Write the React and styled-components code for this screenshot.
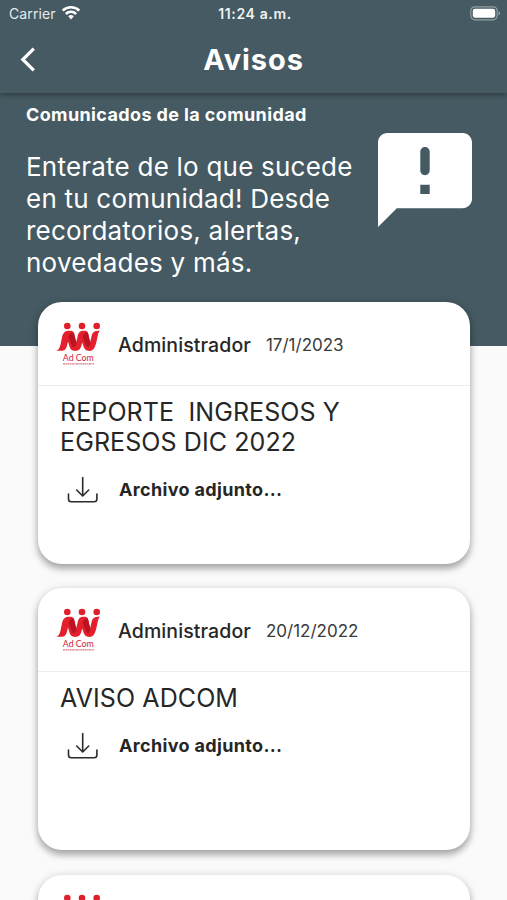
import React from 'react';
import styled, { createGlobalStyle } from 'styled-components';

const notices = [
  { id: 1, author: 'Administrador', date: '17/1/2023', title: 'REPORTE  INGRESOS Y EGRESOS DIC 2022' },
  { id: 2, author: 'Administrador', date: '20/12/2022', title: 'AVISO ADCOM' },
  { id: 3 },
];

const WifiIcon = () => (
  <svg width="20" height="15" viewBox="0 0 20 15" fill="none" stroke="#fff" strokeWidth="2.5">
    <path d="M1.7 5.7a11.8 11.8 0 0 1 16.6 0" />
    <path d="M4.8 9a7.4 7.4 0 0 1 10.4 0" />
    <path d="M10 14.4l-2.8-3.1a4 4 0 0 1 5.6 0z" fill="#fff" stroke="none" />
  </svg>
);

const BatteryIcon = () => (
  <svg width="31" height="15" viewBox="0 0 31 15">
    <rect x="0.8" y="0.8" width="26.4" height="13" rx="4" fill="none" stroke="#fff" strokeOpacity="0.42" strokeWidth="1.2" />
    <rect x="2.8" y="2.8" width="22.4" height="9" rx="2.2" fill="#fff" />
    <path d="M28.6 5.2c1.8.6 1.8 3.6 0 4.2z" fill="#fff" fillOpacity="0.5" />
  </svg>
);

const BackIcon = () => (
  <svg width="16" height="25" viewBox="0 0 16 25" fill="none" stroke="#fff" strokeWidth="3.2">
    <path d="M13.8 1.6L2.8 12.5L13.8 23.4" />
  </svg>
);

const FeedbackIcon = () => (
  <svg width="94" height="94" viewBox="2 2 20 20" fill="#fff">
    <path
      fillRule="evenodd"
      d="M20 2H4c-1.1 0-2 .9-2 2v18l4-4h14c1.1 0 2-.9 2-2V4c0-1.1-.9-2-2-2zM12 11c-.55 0-1-.45-1-1V6c0-.55.45-1 1-1s1 .45 1 1v4c0 .55-.45 1-1 1zm-1 2h2v2h-2z"
    />
  </svg>
);

const DownloadIcon = () => (
  <svg width="32" height="28" viewBox="0 0 32 28" fill="none" stroke="#2b2b2b" strokeWidth="1.6" strokeLinecap="round" strokeLinejoin="round">
    <path d="M15.700 1.500v18.300M9.700 14l6 6l6-6" />
    <path d="M1.500 18v5a2.800 2.800 0 0 0 2.800 2.800h22.800a2.800 2.800 0 0 0 2.800-2.800v-5" />
  </svg>
);

const Logo = () => (
  <svg width="46" height="46" viewBox="0 0 46 46">
    <g fill="#e01f2d">
      <circle cx="11.3" cy="4" r="3.3" />
      <circle cx="26" cy="4" r="3.3" />
      <circle cx="40.7" cy="4" r="3.3" />
    </g>
    <path d="M.4 28.800C4.500 27 4.500 22 6 15.500C7 10.500 9 8.800 13.500 8.800H15C18 9 18.600 12 19.300 16L20.300 20L21.600 14.500C22.600 10.200 24 8.800 27.600 8.800H29.500C32 9 32.600 12 33.200 16L34.200 20L35.600 14C36.600 10.200 38.500 8.800 43.800 8.600C41.600 12 41.800 15 40.300 20.500C38.800 26.500 37 28.900 33.300 28.900C30 28.900 28.500 27.500 27.200 23.500L26.200 20.500L25.400 23.500C24.200 27.500 22.500 28.900 19.300 28.900C15.800 28.900 14.300 27.500 13.200 23.500L12 19.500L11 23.500C10 27.500 8.300 28.800 5 28.800Z" fill="#e4202e" />
    <path d="M12.500 15C13.500 11 16.500 9.500 17.800 11.500L20.300 21C20.300 24.500 18 26 16 24ZM26.700 15C27.700 11 30.800 9.500 32 11.500L34.300 21C34.300 24.500 32 26 30.200 24Z" fill="#b9141f" />
    <text x="6.800" y="39" fontFamily="Lato, sans-serif" fontSize="9.800" textLength="31" lengthAdjust="spacingAndGlyphs" fill="#d32336">Ad Com</text>
    <path d="M7 41.900h31" stroke="#d77882" strokeWidth="1.100" strokeDasharray="2.200 .5 1.200 .4" />
  </svg>
);

const NoticeCard = ({ notice }) => (
  <Card>
    <CardHeader>
      <Logo />
      {notice.author && <Author>{notice.author}</Author>}
      {notice.date && <NoticeDate>{notice.date}</NoticeDate>}
    </CardHeader>
    {notice.title && (
      <CardBody>
        <NoticeTitle>{notice.title}</NoticeTitle>
        <Attachment>
          <DownloadIcon />
          <AttachmentLabel>Archivo adjunto...</AttachmentLabel>
        </Attachment>
      </CardBody>
    )}
  </Card>
);

const App = () => {
  return (
    <Screen>
      <GlobalStyle />
      <Header>
        <StatusBar>
          <Carrier>
            Carrier
            <WifiIcon />
          </Carrier>
          <Clock>11:24 a.m.</Clock>
          <Battery>
            <BatteryIcon />
          </Battery>
        </StatusBar>
        <NavBar>
          <BackButton aria-label="Volver">
            <BackIcon />
          </BackButton>
          <NavTitle>Avisos</NavTitle>
        </NavBar>
      </Header>
      <Hero>
        <HeroText>
          <HeroHeading>Comunicados de la comunidad</HeroHeading>
          <HeroCopy>
            Enterate de lo que sucede en tu comunidad! Desde recordatorios, alertas, novedades y más.
          </HeroCopy>
        </HeroText>
        <FeedbackIcon />
      </Hero>
      <NoticeList>
        {notices.map((notice) => (
          <NoticeCard key={notice.id} notice={notice} />
        ))}
      </NoticeList>
    </Screen>
  );
};

const GlobalStyle = createGlobalStyle`
  * {
    box-sizing: border-box;
  }
  body {
    margin: 0;
    background: #fafafa;
    font-family: Inter, sans-serif;
    overflow: hidden;
  }
  svg {
    display: block;
    flex-shrink: 0;
  }
  h1, h2, p {
    margin: 0;
  }
`;

const Screen = styled.div`
  height: 900px;
  overflow: hidden;
  background: #fafafa;
`;

const Header = styled.header`
  position: relative;
  height: 93px;
  background: #455a62;
  color: #fff;
  box-shadow: 0 2px 5px rgba(0, 0, 0, 0.35);
`;

const StatusBar = styled.div`
  display: grid;
  grid-template-columns: 1fr auto 1fr;
  align-items: center;
  height: 27px;
  padding: 0 6px 0 9px;
`;

const Carrier = styled.div`
  display: flex;
  align-items: center;
  gap: 5px;
  font-size: 14px;
  letter-spacing: 0.1px;
  color: #e6eaec;

  svg {
    margin-top: -2px;
  }
`;

const Clock = styled.div`
  font-size: 14px;
  font-weight: 600;
  letter-spacing: 0.65px;
  color: #eef1f2;
`;

const Battery = styled.div`
  display: flex;
  justify-content: flex-end;
`;

const NavBar = styled.div`
  display: grid;
  grid-template-columns: 60px 1fr 60px;
  align-items: center;
  height: 64px;
`;

const BackButton = styled.button`
  display: flex;
  padding: 0 0 0 20px;
  border: 0;
  background: none;
`;

const NavTitle = styled.h1`
  text-align: center;
  font-size: 29px;
  font-weight: 700;
  letter-spacing: 0.9px;
`;

const Hero = styled.section`
  display: flex;
  height: 253px;
  padding: 11px 34px 0 26px;
  background: #455a62;
  color: #fff;

  > svg {
    margin-top: 29px;
  }
`;

const HeroText = styled.div`
  width: 352px;
`;

const HeroHeading = styled.h2`
  font-size: 18px;
  font-weight: 700;
  line-height: 22px;
  letter-spacing: 0.38px;
  white-space: nowrap;
`;

const HeroCopy = styled.p`
  width: 335px;
  margin-top: 25px;
  font-size: 26px;
  line-height: 31.9px;
  letter-spacing: 0.22px;
`;

const NoticeList = styled.main`
  position: relative;
  display: flex;
  flex-direction: column;
  gap: 24.3px;
  margin-top: -44px;
  padding: 0 37px 0 38px;
`;

const Card = styled.article`
  flex: none;
  height: 262px;
  border-radius: 24px;
  background: #fff;
  color: #262626;
  box-shadow: 0 5px 7px rgba(0, 0, 0, 0.28), 0 1px 10px rgba(0, 0, 0, 0.14);
`;

const CardHeader = styled.div`
  display: flex;
  align-items: center;
  height: 84px;
  padding: 2px 18px 0;
  border-bottom: 1px solid #ebeeef;
`;

const Author = styled.span`
  margin-left: 16px;
  font-size: 19.5px;
  font-weight: 500;
  letter-spacing: 0.1px;
`;

const NoticeDate = styled.span`
  margin-left: 15px;
  font-size: 17px;
  color: #3a3a3a;
`;

const CardBody = styled.div`
  padding: 11px 22px 0;
`;

const NoticeTitle = styled.p`
  width: 330px;
  font-size: 25px;
  line-height: 30.4px;
  letter-spacing: 0.1px;
  white-space: pre-wrap;
`;

const Attachment = styled.div`
  display: flex;
  align-items: center;
  gap: 20px;
  margin-top: 18px;
  padding-left: 7px;
`;

const AttachmentLabel = styled.span`
  margin-top: -1px;
  font-size: 18px;
  font-weight: 700;
  letter-spacing: 0.34px;
`;

export default App;
